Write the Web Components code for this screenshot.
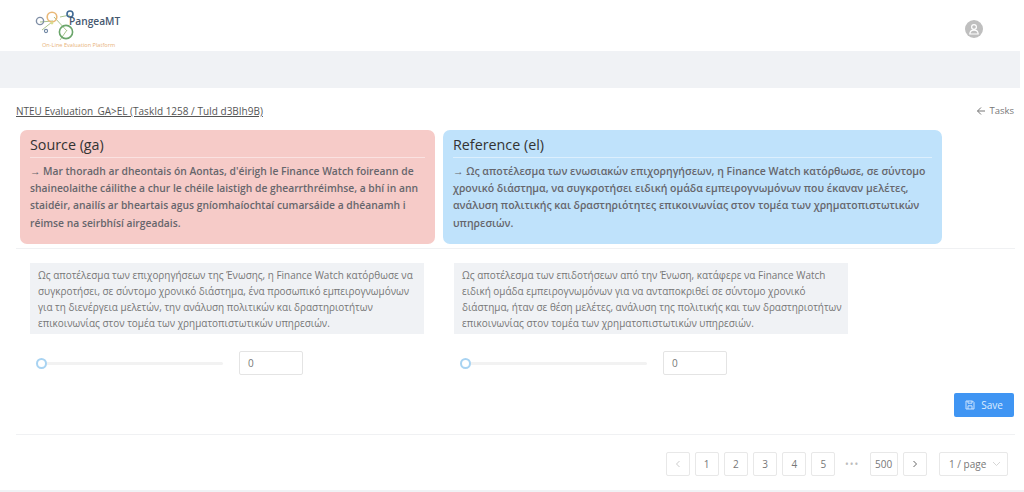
<!DOCTYPE html>
<html lang="en">
<head>
<meta charset="utf-8">
<title>PangeaMT</title>
<style>
  html, body { margin: 0; padding: 0; background: #fff; }
  body { width: 1024px; height: 492px; overflow: hidden; font-family: "Open Sans", "Noto Sans", sans-serif; }
</style>
</head>
<body>
<app-page>
  <app-header slot="header"></app-header>
  <task-title slot="title" text="NTEU Evaluation_GA&gt;EL (TaskId 1258 / TuId d3BIh9B)"></task-title>
  <ref-card slot="cards" heading="Source (ga)" style="--card-bg:#f6cbc8;--card-w:415px;--card-fs:10.3px">→ Mar thoradh ar dheontais ón Aontas, d'éirigh le Finance Watch foireann de shaineolaithe cáilithe a chur le chéile laistigh de ghearrthréimhse, a bhí in ann staidéir, anailís ar bheartais agus gníomhaíochtaí cumarsáide a dhéanamh i réimse na seirbhísí airgeadais.</ref-card>
  <ref-card slot="cards" heading="Reference (el)" style="--card-bg:#bfe2fb;--card-w:499px;--card-fs:10.5px">→ Ως αποτέλεσμα των ενωσιακών επιχορηγήσεων, η Finance Watch κατόρθωσε, σε σύντομο χρονικό διάστημα, να συγκροτήσει ειδική ομάδα εμπειρογνωμόνων που έκαναν μελέτες, ανάλυση πολιτικής και δραστηριότητες επικοινωνίας στον τομέα των χρηματοπιστωτικών υπηρεσιών.</ref-card>
  <hyp-block slot="hyps">Ως αποτέλεσμα των επιχορηγήσεων της Ένωσης, η Finance Watch κατόρθωσε να συγκροτήσει, σε σύντομο χρονικό διάστημα, ένα προσωπικό εμπειρογνωμόνων για τη διενέργεια μελετών, την ανάλυση πολιτικών και δραστηριοτήτων επικοινωνίας στον τομέα των χρηματοπιστωτικών υπηρεσιών.</hyp-block>
  <hyp-block slot="hyps">Ως αποτέλεσμα των επιδοτήσεων από την Ένωση, κατάφερε να Finance Watch ειδική ομάδα εμπειρογνωμόνων για να ανταποκριθεί σε σύντομο χρονικό διάστημα, ήταν σε θέση μελέτες, ανάλυση της πολιτικής και των δραστηριοτήτων επικοινωνίας στον τομέα των χρηματοπιστωτικών υπηρεσιών.</hyp-block>
  <save-button slot="save"></save-button>
  <page-pager slot="pager"></page-pager>
</app-page>

<script>
class AppPage extends HTMLElement {
  constructor() {
    super();
    this.attachShadow({ mode: "open" });
    this.shadowRoot.innerHTML = `
      <style>
        :host { display: block; width: 1024px; height: 492px; background: #fff; }
        .band { height: 37px; width: 1020px; background: #f0f2f5; }
        .content { padding: 0 10px 0 16px; height: 402px; border-bottom: 2px solid #f0f2f5; box-sizing: content-box; }
        .cards { display: flex; gap: 8px; padding-left: 4px; }
        .rule { height: 1px; background: #f0f1f3; margin-top: 4px; width: 999px; }
        .hyps { display: grid; grid-template-columns: 424px 394px; padding: 14px 0 0 14px; }
        .save { display: flex; justify-content: flex-end; margin-top: 18px; }
        .rule2 { height: 1px; background: #f0f1f3; margin-top: 17px; width: 999px; }
        .pager { display: flex; justify-content: flex-end; margin-top: 17px; padding-right: 6px; }
      </style>
      <slot name="header"></slot>
      <div class="band"></div>
      <div class="content">
        <slot name="title"></slot>
        <div class="cards"><slot name="cards"></slot></div>
        <div class="rule"></div>
        <div class="hyps"><slot name="hyps"></slot></div>
        <div class="save"><slot name="save"></slot></div>
        <div class="rule2"></div>
        <div class="pager"><slot name="pager"></slot></div>
      </div>`;
  }
}

class AppHeader extends HTMLElement {
  constructor() {
    super();
    this.attachShadow({ mode: "open" });
    this.shadowRoot.innerHTML = `
      <style>
        :host { display: flex; align-items: center; justify-content: space-between; height: 51px; background: #fff; padding: 0 41px 0 34px; }
        svg { display: block; }
        .avatar { width: 18px; height: 18px; border-radius: 50%; background: #bfbfbf; display: flex; align-items: center; justify-content: center; margin-top: 6px; }
      </style>
      <svg width="100" height="48" viewBox="0 0 100 48" fill="none">
        <path d="M6 20 L19 19 M20 15 L33 29 M26 15 L36 13 M8 28 L18 20 M26 38 L33 28" stroke="#a9c48d" stroke-width="1"/>
        <circle cx="6" cy="19" r="3.6" stroke="#7f8fa6" stroke-width="1.4"/>
        <circle cx="18" cy="15" r="4.8" stroke="#e9b878" stroke-width="1.6"/>
        <circle cx="36" cy="12" r="3" stroke="#3f6a96" stroke-width="1.6"/>
        <circle cx="32" cy="30" r="6.6" stroke="#6aa56a" stroke-width="1.6"/>
        <circle cx="12" cy="29" r="1.6" stroke="#6f86a3" stroke-width="1.1"/>
        <circle cx="18" cy="21" r="1.4" fill="#d9dd8e"/>
        <text x="35" y="23" font-family="'Open Sans',sans-serif" font-size="10.2" font-weight="600" fill="#46586f">PangeaMT</text>
        <text x="8" y="44.5" font-family="'Open Sans',sans-serif" font-size="5.6" fill="#e8b27a">On-Line Evaluation Platform</text>
      </svg>
      <div class="avatar">
        <svg width="12" height="12" viewBox="0 0 12 12" fill="none" stroke="#fff" stroke-width="1.2">
          <circle cx="6" cy="4" r="2.4"/>
          <path d="M1.8 11 C2 8.3 3.6 7.2 6 7.2 S10 8.3 10.2 11 Z"/>
        </svg>
      </div>`;
  }
}

class TaskTitle extends HTMLElement {
  constructor() {
    super();
    this.attachShadow({ mode: "open" });
    this.shadowRoot.innerHTML = `
      <style>
        :host { display: flex; justify-content: space-between; align-items: flex-end; box-sizing: border-box; height: 42px; padding-bottom: 12px; font-size: 10px; line-height: 14px; }
        .t { color: #555; text-decoration: underline; }
        .back { color: #777; font-size: 9.5px; display: flex; align-items: center; gap: 3px; }
        svg { display: block; }
      </style>
      <span class="t"></span>
      <span class="back">
        <svg width="10" height="10" viewBox="0 0 10 10" fill="none" stroke="#777" stroke-width="1"><path d="M9 5H1.5M5 1.5L1.5 5L5 8.5"/></svg>
        Tasks
      </span>`;
    this.shadowRoot.querySelector(".t").textContent = this.getAttribute("text");
  }
}

class RefCard extends HTMLElement {
  constructor() {
    super();
    this.attachShadow({ mode: "open" });
    this.shadowRoot.innerHTML = `
      <style>
        :host { display: block; box-sizing: border-box; width: var(--card-w); height: 114px; background: var(--card-bg); border-radius: 7px; padding: 4px 10px 0; }
        h3 { margin: 0; font-size: 14.3px; font-weight: 400; line-height: 22px; color: #333; padding-bottom: 1px; border-bottom: 1px solid rgba(255,255,255,.45); }
        .body { margin-top: 5px; font-size: var(--card-fs); font-weight: 600; line-height: 17.2px; color: #66666c; }
      </style>
      <h3></h3>
      <div class="body"><slot></slot></div>`;
    this.shadowRoot.querySelector("h3").textContent = this.getAttribute("heading");
  }
}

class HypBlock extends HTMLElement {
  constructor() {
    super();
    this.attachShadow({ mode: "open" });
    this.shadowRoot.innerHTML = `
      <style>
        :host { display: block; }
        .text { width: 394px; height: 71px; box-sizing: border-box; background: #f0f2f5; padding: 4px 6px 4px 8px; font-size: 9.95px; line-height: 16px; color: #777; }
        .row { display: flex; align-items: center; margin-top: 17px; padding-left: 6px; }
        score-slider { margin-right: 16px; }
      </style>
      <div class="text"><slot></slot></div>
      <div class="row"><score-slider></score-slider><score-input value="0"></score-input></div>`;
  }
}

class ScoreSlider extends HTMLElement {
  constructor() {
    super();
    this.attachShadow({ mode: "open" });
    this.shadowRoot.innerHTML = `
      <style>
        :host { display: block; position: relative; width: 187px; height: 12px; }
        .track { position: absolute; left: 0; right: 0; top: 4.5px; height: 3px; background: #f2f2f2; border-radius: 2px; }
        .handle { position: absolute; left: 0; top: 1px; width: 7px; height: 7px; border: 2px solid #a8d3f2; border-radius: 50%; background: #fff; }
      </style>
      <div class="track"></div>
      <div class="handle"></div>`;
  }
}

class ScoreInput extends HTMLElement {
  constructor() {
    super();
    this.attachShadow({ mode: "open" });
    this.shadowRoot.innerHTML = `
      <style>
        :host { display: block; box-sizing: border-box; width: 64px; height: 24px; border: 1px solid #e4e4e4; border-radius: 2px; padding-left: 8px; font-size: 10px; line-height: 22px; color: #777; background: #fff; }
      </style>
      <span></span>`;
    this.shadowRoot.querySelector("span").textContent = this.getAttribute("value");
  }
}

class SaveButton extends HTMLElement {
  constructor() {
    super();
    this.attachShadow({ mode: "open" });
    this.shadowRoot.innerHTML = `
      <style>
        :host { display: flex; align-items: center; justify-content: center; gap: 6px; width: 60px; height: 24px; background: #3f95f3; border-radius: 2px; color: #dcecff; font-size: 10px; }
        svg { display: block; }
      </style>
      <svg width="10" height="10" viewBox="0 0 10 10" fill="none" stroke="#dcecff" stroke-width="0.9"><path d="M1 1H7.5L9 2.5V9H1Z"/><path d="M3 1V3.2H7V1M3 9V5.8H7V9"/></svg>
      Save`;
  }
}

class PagePager extends HTMLElement {
  constructor() {
    super();
    this.attachShadow({ mode: "open" });
    const items = ["1", "2", "3", "4", "5"].map(n => `<span class="b">${n}</span>`).join("");
    this.shadowRoot.innerHTML = `
      <style>
        :host { display: flex; align-items: center; height: 24px; font-size: 10px; color: #777; }
        .b { box-sizing: border-box; width: 24px; height: 24px; margin-right: 5.2px; border: 1px solid #e8e8e8; border-radius: 2px; display: flex; align-items: center; justify-content: center; background: #fff; }
        .dots { width: 23px; margin-right: 6px; text-align: center; letter-spacing: 1px; color: #bbb; }
        .wide { width: 28px; }
        .sel { box-sizing: border-box; width: 69px; height: 24px; margin-left: 7px; border: 1px solid #e8e8e8; border-radius: 2px; display: flex; align-items: center; justify-content: space-between; padding: 0 6px 0 9px; }
        svg { display: block; }
      </style>
      <span class="b"><svg width="8" height="8" viewBox="0 0 8 8" fill="none" stroke="#ccc"><path d="M5.5 1L2.5 4L5.5 7"/></svg></span>
      ${items}
      <span class="dots">•••</span>
      <span class="b wide">500</span>
      <span class="b"><svg width="8" height="8" viewBox="0 0 8 8" fill="none" stroke="#666"><path d="M2.5 1L5.5 4L2.5 7"/></svg></span>
      <span class="sel">1 / page <svg width="9" height="6" viewBox="0 0 9 6" fill="none" stroke="#ccc" stroke-width=".8"><path d="M1 1L4.5 4.5L8 1"/></svg></span>`;
  }
}

customElements.define("app-page", AppPage);
customElements.define("app-header", AppHeader);
customElements.define("task-title", TaskTitle);
customElements.define("ref-card", RefCard);
customElements.define("score-slider", ScoreSlider);
customElements.define("score-input", ScoreInput);
customElements.define("hyp-block", HypBlock);
customElements.define("save-button", SaveButton);
customElements.define("page-pager", PagePager);
</script>
</body>
</html>
